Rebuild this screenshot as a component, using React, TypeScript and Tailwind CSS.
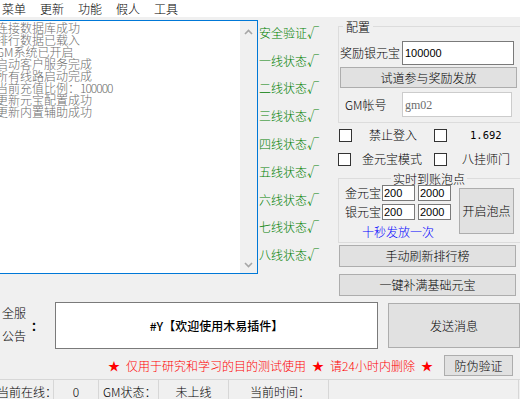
import React from "react";

const logLines: React.ReactNode[] = [
  "连接数据库成功",
  "排行数据已载入",
  "GM系统已开启",
  "启动客户服务完成",
  "所有线路启动完成",
  <>
    当前充值比例：<span className="tracking-[-1px]">100000</span>
  </>,
  "更新元宝配置成功",
  "更新内置辅助成功",
];

const lineLabels = ["安全验证", "一线状态", "二线状态", "三线状态", "四线状态", "五线状态", "六线状态", "七线状态", "八线状态"];

function Btn({ className, children }: { className: string; children?: React.ReactNode }) {
  return (
    <div className={"bg-[#e1e1e1] border border-[#adadad] flex items-center justify-center leading-[12px] shrink-0 " + className}>
      {children}
    </div>
  );
}

function Box() {
  return <div className="w-[13px] h-[13px] border border-[#333333] bg-white shrink-0" />;
}

export default function App() {
  return (
    <div className="w-[520px] h-[399px] overflow-hidden bg-[#f0f0f0] flex flex-col text-[12px] font-light text-black font-['Noto_Sans_CJK_SC',sans-serif]">
      {/* menu bar */}
      <div className="h-[17px] bg-white flex items-center pl-[2px] gap-[14px] leading-[12px] shrink-0">
        {["菜单", "更新", "功能", "假人", "工具"].map((m) => (
          <span key={m} className="w-[24px] whitespace-nowrap">{m}</span>
        ))}
      </div>

      {/* main area */}
      <div className="flex h-[285px] shrink-0">
        {/* log box */}
        <div className="w-[258px] shrink-0">
          <div className="mt-[3px] ml-[-2px] w-[260px] h-[254px] border border-[#0078d7] bg-white flex">
            <div className="flex-1 overflow-hidden pt-[1px] text-[#6d6d6d] leading-[12px]">
              {logLines.map((l, i) => (
                <div key={i} className="ml-[-3px] whitespace-nowrap">{l}</div>
              ))}
            </div>
            <div className="w-[17px] bg-[#f0f0f0] flex flex-col justify-between items-center pt-[8px] pb-[5px]">
              <svg width="9" height="6" viewBox="0 0 9 6">
                <path d="M1 5 L4.5 1.5 L8 5" stroke="#a6a6a6" strokeWidth="1.6" fill="none" />
              </svg>
              <svg width="9" height="6" viewBox="0 0 9 6">
                <path d="M1 1 L4.5 4.5 L8 1" stroke="#a6a6a6" strokeWidth="1.6" fill="none" />
              </svg>
            </div>
          </div>
        </div>

        {/* green labels */}
        <div className="w-[80px] shrink-0 pt-[2px] flex flex-col text-[#008000]">
          {lineLabels.map((t) => (
            <div key={t} className="h-[27.8px] flex items-center pl-[1px] whitespace-nowrap leading-[12px]">
              {t}√
            </div>
          ))}
        </div>

        {/* right column */}
        <div className="w-[182px] shrink-0 flex flex-col">
          <fieldset className="mt-[3px] border border-r-0 border-[#dcdcdc] pb-[5px]">
            <legend className="ml-[4px] px-[3px] leading-[13px]">配置</legend>
            <div className="flex items-center mt-[8px] h-[24px]">
              <span className="ml-[1px] w-[62px] whitespace-nowrap">奖励银元宝</span>
              <div className="w-[112px] h-[24px] border border-[#7a7a7a] bg-white flex items-center pl-[2px] font-['Liberation_Sans',sans-serif] font-normal text-[11px]">
                100000
              </div>
            </div>
            <Btn className="mt-[2px] ml-[1px] w-[177px] h-[21px]">试道参与奖励发放</Btn>
            <div className="flex items-center mt-[4px] h-[25px]">
              <span className="ml-[6px] w-[57px] whitespace-nowrap">GM帐号</span>
              <div className="w-[110px] h-[25px] border border-[#cccccc] bg-white flex items-center pl-[2px] text-[#6d6d6d] font-['Liberation_Serif',serif] font-normal text-[12px]">
                gm02
              </div>
            </div>
          </fieldset>

          <div className="h-[24px] flex items-center leading-[12px]">
            <div className="ml-[1px]"><Box /></div>
            <span className="ml-[17px] w-[48px] whitespace-nowrap">禁止登入</span>
            <div className="ml-[17px]"><Box /></div>
            <span className="ml-[23px] font-['DejaVu_Sans_Mono',monospace] font-normal text-[10.5px]">1.692</span>
          </div>
          <div className="h-[24px] flex items-center leading-[12px]">
            <Box />
            <span className="ml-[11px] w-[60px] whitespace-nowrap">金元宝模式</span>
            <div className="ml-[12px]"><Box /></div>
            <span className="ml-[15px] whitespace-nowrap">八挂师门</span>
          </div>

          <fieldset className="mt-[1px] border border-r-0 border-[#dcdcdc] pb-[4px]">
            <legend className="ml-[52px] px-[2px] leading-[13px]">实时到账泡点</legend>
            <div className="flex">
              <div className="flex flex-col w-[112px] shrink-0">
                {["金元宝", "银元宝"].map((lab, i) => (
                  <div key={lab} className={"flex items-center h-[16px] " + (i === 1 ? "mt-[3px]" : "")}>
                    <span className="ml-[6px] w-[37px] whitespace-nowrap leading-[12px]">{lab}</span>
                    <div className="w-[33px] h-[16px] border border-[#7a7a7a] bg-white flex items-center pl-[1px] font-['Liberation_Sans',sans-serif] font-normal text-[11px]">200</div>
                    <div className="ml-[3px] w-[33px] h-[16px] border border-[#7a7a7a] bg-white flex items-center pl-[1px] font-['Liberation_Sans',sans-serif] font-normal text-[11px]">2000</div>
                  </div>
                ))}
                <div className="mt-[6px] ml-[23px] text-[#0000ff] leading-[12px] whitespace-nowrap">十秒发放一次</div>
              </div>
              <Btn className="ml-[8px] mt-[3px] w-[55px] h-[46px]">开启泡点</Btn>
            </div>
          </fieldset>

          <Btn className="mt-[2px] ml-[1px] w-[177px] h-[22px]">手动刷新排行榜</Btn>
          <Btn className="mt-[7px] ml-[1px] w-[177px] h-[22px]">一键补满基础元宝</Btn>
        </div>
      </div>

      {/* announcement */}
      <div className="flex h-[47px] shrink-0">
        <div className="w-[30px] pl-[2px] flex flex-col mt-[-1px] shrink-0">
          <div className="h-[23.5px] flex items-center leading-[12px]">全服</div>
          <div className="h-[23.5px] flex items-center leading-[12px]">公告</div>
        </div>
        <div className="w-[25px] flex items-center pl-[1px] font-bold leading-[12px] shrink-0">：</div>
        <div className="w-[323px] h-[47px] border border-[#7a7a7a] bg-white flex items-center justify-center font-medium leading-[12px] whitespace-nowrap shrink-0">
          #Y【欢迎使用木易插件】
        </div>
        <Btn className="ml-[10px] mt-[1px] w-[132px] h-[45px]">发送消息</Btn>
      </div>

      {/* red notice */}
      <div className="flex h-[30px] shrink-0">
        <div className="ml-[108px] w-[336px] mt-[11px] flex text-[#ff0000] leading-[12px] whitespace-nowrap shrink-0">
          <span>★</span>
          <span className="ml-[6px]">仅用于研究和学习的目的测试使用</span>
          <span className="ml-[6px]">★</span>
          <span className="ml-[6px]">请24小时内删除</span>
          <span className="ml-[6px]">★</span>
        </div>
        <Btn className="mt-[6px] w-[69px] h-[21px]">防伪验证</Btn>
      </div>

      {/* status bar */}
      <div className="h-[20px] border-t border-[#d7d7d7] flex leading-[12px] shrink-0">
        <div className="w-[54px] border-r border-[#d7d7d7] pt-[6px] whitespace-nowrap overflow-hidden">
          <span className="ml-[-3px]">当前在线：</span>
        </div>
        <div className="w-[45px] border-r border-[#d7d7d7] pt-[6px] flex justify-center">0</div>
        <div className="w-[60px] border-r border-[#d7d7d7] pt-[6px] pl-[4px] whitespace-nowrap">GM状态：</div>
        <div className="w-[70px] border-r border-[#d7d7d7] pt-[6px] flex justify-center">未上线</div>
        <div className="w-[100px] border-r border-[#d7d7d7] pt-[6px] pl-[21px] whitespace-nowrap">当前时间：</div>
        <div className="w-[190px] border-r border-[#d7d7d7]" />
      </div>
    </div>
  );
}
